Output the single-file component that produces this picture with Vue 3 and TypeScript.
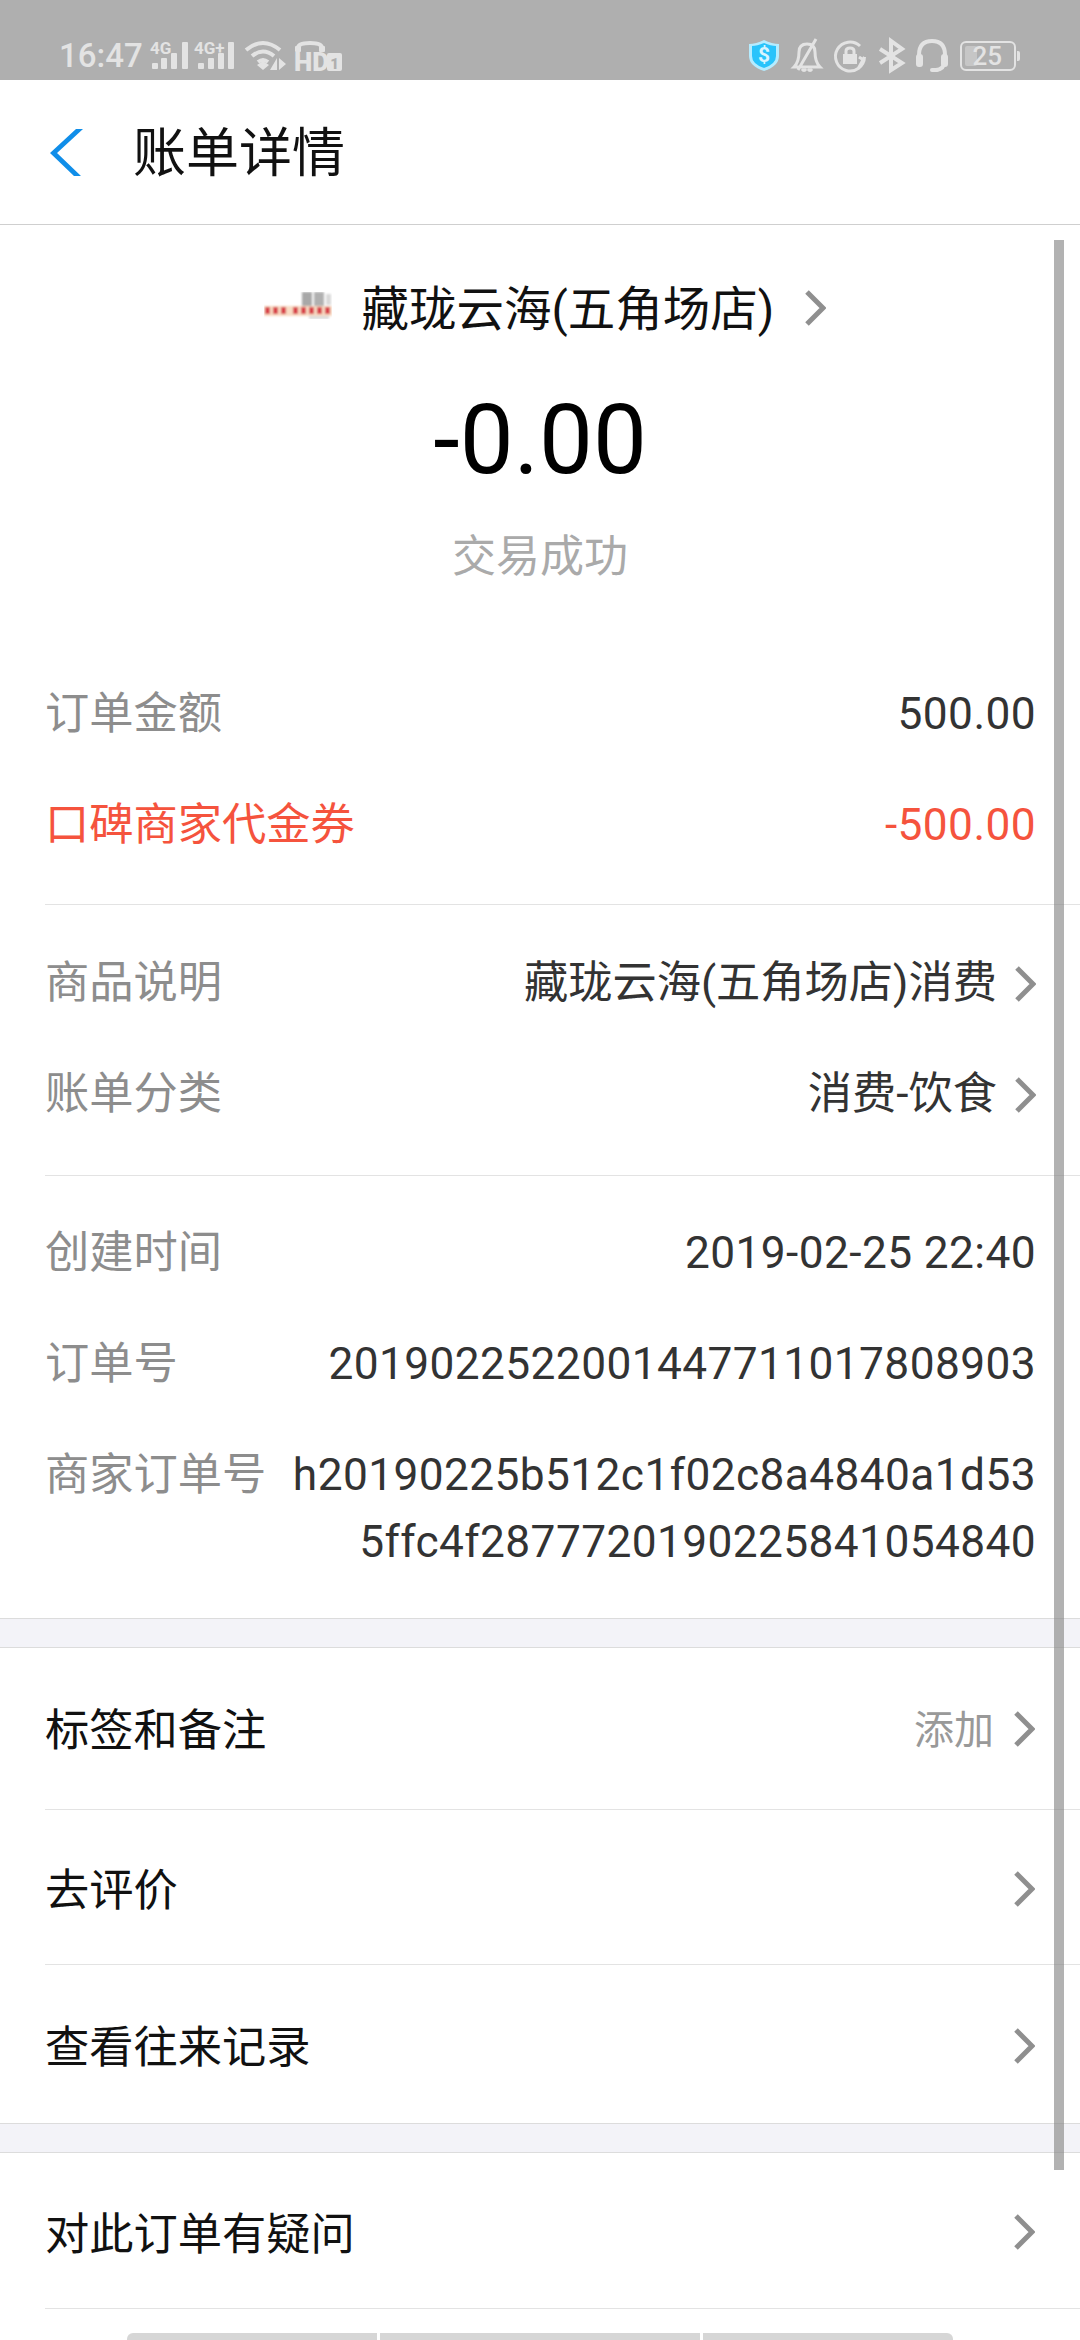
<script setup lang="ts">
interface InfoRow {
  label: string
  value: string
  link?: boolean
  red?: boolean
}

const amountRows: InfoRow[] = [
  { label: '订单金额', value: '500.00' },
  { label: '口碑商家代金券', value: '-500.00', red: true },
]
const goodsRows: InfoRow[] = [
  { label: '商品说明', value: '藏珑云海(五角场店)消费', link: true },
  { label: '账单分类', value: '消费-饮食', link: true },
]
const orderRows: InfoRow[] = [
  { label: '创建时间', value: '2019-02-25 22:40' },
  { label: '订单号', value: '2019022522001447711017808903' },
  { label: '商家订单号', value: 'h20190225b512c1f02c8a4840a1d535ffc4f2877720190225841054840' },
]
const groups = [amountRows, goodsRows, orderRows]

// blurred logo, just coloured blocks
const logoReds = [1, 9, 17, 29, 37, 45, 53, 61]
</script>

<template>
  <div class="page">
    <div class="status">
      <div class="status-left">
        <span class="time">16:47</span>
        <svg class="ic sig-a" width="38" height="28" viewBox="0 0 38 28">
          <text x="0" y="12" class="tiny">4G</text>
          <rect x="2" y="21" width="6" height="6" rx="1" />
          <rect x="11" y="16" width="6" height="11" rx="1" />
          <rect x="21" y="11" width="6" height="16" rx="1" />
          <rect x="32" y="0" width="6" height="27" rx="1" />
        </svg>
        <svg class="ic sig-b" width="40" height="28" viewBox="0 0 40 28">
          <text x="0" y="12" class="tiny">4G+</text>
          <rect x="4" y="21" width="6" height="6" rx="1" />
          <rect x="14" y="16" width="6" height="11" rx="1" />
          <rect x="24" y="11" width="6" height="16" rx="1" />
          <rect x="34" y="0" width="6" height="27" rx="1" />
        </svg>
        <svg class="ic wifi" width="42" height="30" viewBox="0 0 42 30">
          <path class="line" d="M2 9 Q19 -5 36 9 M8 15 Q19 6 30 15 M14 21 Q19 17 24 21" />
          <path d="M13 24 L19 20 L25 24 L19 29 Z" />
          <path d="M33 17 V29 H26 Z M35 17 L42 23 L35 29 Z" />
        </svg>
        <svg class="ic hd-icon" width="48" height="32" viewBox="0 0 48 32">
          <path class="line" d="M4 10 V8 Q4 3 16 3 Q28 3 28 8 V10" />
          <rect x="1" y="6" width="6" height="6" rx="1" />
          <rect x="25" y="6" width="6" height="6" rx="1" />
          <text x="0" y="31" class="hd">HD</text>
          <rect x="33" y="13" width="15" height="18" rx="2" />
          <text x="40.5" y="29" text-anchor="middle" class="hd-one">1</text>
        </svg>
      </div>
      <div class="status-right">
        <svg width="32" height="33" viewBox="0 0 32 33">
          <path d="M16 1 Q24 5 31 5 V17 Q31 27 16 32 Q1 27 1 17 V5 Q8 5 16 1 Z" fill="#b5ecff" />
          <path d="M16 4 Q23 7 28 7 V17 Q28 25 16 29 Q4 25 4 17 V7 Q9 7 16 4 Z" fill="#29c3fb" />
          <text x="16" y="23" text-anchor="middle" class="dollar">$</text>
        </svg>
        <svg class="ic" width="30" height="33" viewBox="0 0 30 33">
          <path class="line thin" d="M2 28 Q7 23 7 13 Q7 5 15 5 Q23 5 23 13 Q23 23 28 28 Z M6 31 L24 0 M10 30 Q12 33 14 30 M16 30 Q18 33 20 30" />
        </svg>
        <svg class="ic" width="32" height="32" viewBox="0 0 32 32">
          <path class="line thin" d="M30.5 17 A14.5 14.5 0 1 1 26 6 M24 29 L30.5 17 M25 17 L31 21" />
          <rect x="9" y="14" width="14" height="10" />
          <path class="line thin" d="M12 14 V11 Q12 8 16 8 Q20 8 20 11 V14" />
        </svg>
        <svg class="ic" width="26" height="33" viewBox="0 0 26 33">
          <path class="line" d="M2 10 L24 24 L13 31 V2 L24 10 L2 24" />
        </svg>
        <svg class="ic" width="32" height="33" viewBox="0 0 32 33">
          <path class="line" d="M3 20 V16 Q3 2 16 2 Q29 2 29 16 V20 M28 24 Q28 30 20 31" />
          <rect x="0" y="15" width="7" height="13" rx="3" />
          <rect x="25" y="15" width="7" height="13" rx="3" />
          <rect x="14" y="29" width="9" height="4" rx="2" />
        </svg>
        <div class="battery">
          <span class="battery-fill"></span>
          <span class="battery-num">25</span>
          <span class="battery-nub"></span>
        </div>
      </div>
    </div>

    <header class="header">
      <svg class="back" width="33" height="47" viewBox="0 0 33 47">
        <path d="M26 0 H33 L7 24 L31 47 H24 L0 24 Z" fill="#108ee9" />
      </svg>
      <h1 class="title">账单详情</h1>
    </header>

    <section class="summary">
      <div class="merchant">
        <svg class="logo" width="68" height="27" viewBox="0 0 68 27">
          <defs>
            <filter id="logo-blur" x="-10%" y="-20%" width="120%" height="140%">
              <feGaussianBlur stdDeviation="1.1" />
            </filter>
          </defs>
          <g filter="url(#logo-blur)">
            <rect x="38" y="0" width="10" height="14" fill="#a8a8a8" />
            <rect x="50" y="0" width="10" height="14" fill="#b0b0b0" />
            <rect x="62" y="2" width="5" height="11" fill="#d8d8d8" />
            <rect x="0" y="14" width="68" height="10" fill="#f8dcc4" />
            <rect v-for="x in logoReds" :key="x" :x="x" y="15" width="5" height="7" fill="#d8404a" />
            <rect x="45" y="24" width="20" height="3" fill="#dcdcdc" />
          </g>
        </svg>
        <span class="merchant-name">藏珑云海(五角场店)</span>
        <svg class="arrow merchant-arrow" width="22" height="38" viewBox="0 0 22 38">
          <path d="M3 3 L19 19 L3 35" />
        </svg>
      </div>
      <div class="amount">-0.00</div>
      <div class="result">交易成功</div>
    </section>

    <section v-for="(group, i) in groups" :key="i" class="group">
      <div v-for="row in group" :key="row.label" class="info-row" :class="{ red: row.red }">
        <span class="info-label">{{ row.label }}</span>
        <span class="info-value" :class="{ 'info-plain': !row.link }">{{ row.value }}</span>
        <svg v-if="row.link" class="arrow" width="22" height="38" viewBox="0 0 22 38">
          <path d="M3 3 L19 19 L3 35" />
        </svg>
      </div>
    </section>

    <div class="spacer"></div>

    <div class="menu-row menu-tag">
      <span class="menu-label">标签和备注</span>
      <span class="menu-extra">添加</span>
      <svg class="arrow" width="22" height="38" viewBox="0 0 22 38"><path d="M3 3 L19 19 L3 35" /></svg>
    </div>
    <div class="menu-row menu-review">
      <span class="menu-label">去评价</span>
      <svg class="arrow" width="22" height="38" viewBox="0 0 22 38"><path d="M3 3 L19 19 L3 35" /></svg>
    </div>
    <div class="menu-row menu-record">
      <span class="menu-label">查看往来记录</span>
      <svg class="arrow" width="22" height="38" viewBox="0 0 22 38"><path d="M3 3 L19 19 L3 35" /></svg>
    </div>

    <div class="spacer"></div>

    <div class="menu-row menu-question">
      <span class="menu-label">对此订单有疑问</span>
      <svg class="arrow" width="22" height="38" viewBox="0 0 22 38"><path d="M3 3 L19 19 L3 35" /></svg>
    </div>

    <div class="bottom-tabs">
      <span class="tab tab-a"></span>
      <span class="tab tab-b"></span>
      <span class="tab tab-a"></span>
    </div>

    <div class="scrollbar"></div>
  </div>
</template>

<style scoped>
.page {
  position: relative;
  width: 1080px;
  height: 2340px;
  overflow: hidden;
  background: #fff;
  font-family: Roboto, "Noto Sans CJK SC", sans-serif;
  color: #333;
}
.status {
  height: 80px;
  box-sizing: border-box;
  padding: 39px 64px 0 59px;
  background: #afafaf;
  display: flex;
  justify-content: space-between;
  align-items: flex-start;
}
.status-left,
.status-right {
  display: flex;
  align-items: center;
}
.status-right {
  gap: 12px;
}
.time {
  font-size: 33px;
  line-height: 34px;
  font-weight: 500;
  color: #e3e3e3;
}
.sig-a {
  margin-left: 7px;
}
.sig-b {
  margin-left: 6px;
}
.wifi {
  margin-left: 10px;
}
.hd-icon {
  margin-left: 8px;
}
.ic {
  fill: #e3e3e3;
  overflow: visible;
}
.line {
  fill: none;
  stroke: #e3e3e3;
  stroke-width: 4;
}
.thin {
  stroke-width: 3;
}
.tiny {
  font-family: Roboto, sans-serif;
  font-size: 17px;
  font-weight: 700;
}
.hd {
  font-family: Roboto, sans-serif;
  font-size: 26px;
  font-weight: 900;
}
.hd-one {
  font-family: Roboto, sans-serif;
  font-size: 15px;
  font-weight: 900;
  fill: #afafaf;
}
.dollar {
  font-family: Roboto, sans-serif;
  font-size: 21px;
  font-weight: 700;
  fill: #d8f5ff;
}
.battery {
  position: relative;
  box-sizing: border-box;
  width: 56px;
  height: 30px;
  border: 2px solid #e3e3e3;
  border-radius: 6px;
  display: flex;
  align-items: center;
  justify-content: flex-end;
  padding-right: 12px;
}
.battery-fill {
  position: absolute;
  left: 3px;
  top: 3px;
  bottom: 3px;
  width: 12px;
  background: #c6c6c6;
  border-radius: 2px;
}
.battery-num {
  position: relative;
  font-size: 26px;
  font-weight: 500;
  color: #e3e3e3;
}
.battery-nub {
  position: absolute;
  right: -6px;
  top: 8px;
  width: 3px;
  height: 10px;
  background: #e3e3e3;
  border-radius: 0 2px 2px 0;
}
.header {
  height: 145px;
  box-sizing: border-box;
  border-bottom: 1px solid #cfcfcf;
  padding-left: 50px;
  display: flex;
  align-items: center;
}
.back {
  margin-right: 50px;
}
.title {
  margin: 0 0 6px;
  font-size: 53px;
  font-weight: 400;
  color: #111;
}
.summary {
  height: 412px;
  box-sizing: border-box;
  padding: 54px 0 0 10px;
  display: flex;
  flex-direction: column;
  align-items: center;
}
.merchant {
  display: flex;
  align-items: center;
  height: 52px;
  font-size: 47.5px;
  color: #111;
}
.logo {
  margin-right: 30px;
}
.merchant-arrow {
  margin: 5px 0 0 30px;
}
.amount {
  margin: 52px 10px 0 0;
  height: 114px;
  line-height: 114px;
  font-size: 96px;
  color: #000;
}
.result {
  margin: 32px 10px 0 0;
  font-size: 44px;
  line-height: 56px;
  color: #aaa;
}
.group {
  margin: 0 0 0 45px;
  padding: 22px 44px 23px 0;
  border-bottom: 1px solid #e3e3e3;
}
.group:nth-of-type(3) {
  padding: 23px 44px 25px 0;
}
.group:nth-of-type(4) {
  padding-bottom: 20px;
  border-bottom: none;
}
.info-row {
  display: flex;
  align-items: flex-start;
  padding: 22px 0;
  font-size: 44.25px;
  line-height: 67px;
}
.info-label {
  flex: none;
  color: #8d8d8d;
}
.info-value {
  flex: 1;
  min-width: 0;
  margin-left: 18px;
  text-align: right;
  word-break: break-all;
  color: #333;
}
.info-plain {
  letter-spacing: 0.4px;
}
.info-row .arrow {
  flex: none;
  margin: 15px 0 0 17px;
}
.red .info-label,
.red .info-value {
  color: #f5533d;
}
.spacer {
  height: 28px;
  background: #f3f3f8;
  border-top: 1px solid #dcdcdc;
  border-bottom: 1px solid #dcdcdc;
}
.menu-row {
  display: flex;
  align-items: center;
  margin-left: 45px;
  padding-right: 45px;
  font-size: 44.25px;
  color: #111;
  box-sizing: border-box;
}
.menu-row .arrow {
  margin-top: 3px;
}
.menu-tag {
  height: 162px;
  padding-bottom: 3px;
  border-bottom: 1px solid #e3e3e3;
}
.menu-review {
  height: 155px;
  border-bottom: 1px solid #e3e3e3;
}
.menu-record {
  height: 158px;
}
.menu-question {
  height: 156px;
  border-bottom: 1px solid #e3e3e3;
}
.menu-label {
  flex: 1;
}
.menu-extra {
  margin-right: 19px;
  font-size: 40px;
  color: #999;
}
.bottom-tabs {
  display: flex;
  gap: 3px;
  margin: 24px 0 0 127px;
}
.tab {
  height: 10px;
  background: #d6d6d6;
}
.tab-a {
  width: 250px;
  border-radius: 6px 0 0 0;
}
.tab-a:last-child {
  border-radius: 0 6px 0 0;
}
.tab-b {
  width: 320px;
}
.arrow {
  fill: none;
}
.arrow path {
  fill: none;
  stroke: #8f8f8f;
  stroke-width: 5;
}
.scrollbar {
  position: absolute;
  left: 1054px;
  top: 240px;
  width: 10px;
  height: 1930px;
  background: rgba(130, 130, 130, 0.62);
}
</style>
